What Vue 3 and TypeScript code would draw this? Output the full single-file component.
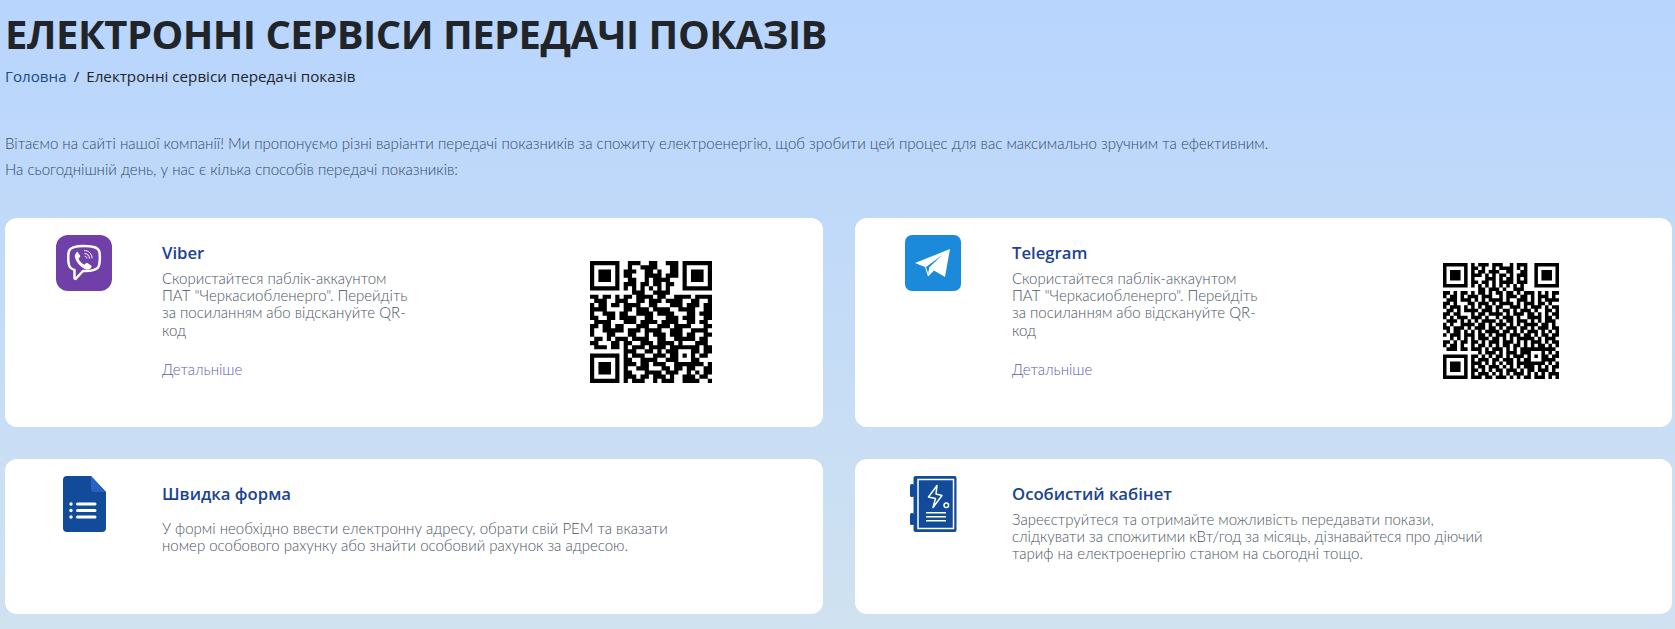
<script setup lang="ts">
const viberRows = [
  '.........###..##..###........',
  '.........#..####...##........',
  '........###..##.#..##........',
  '........##...####.###........',
  '.........##..#.####..........',
  '........###.##.##.##.........',
  '........#.#.#.#.#.#..........',
  '..........###..####..........',
  '##.##.#.##.####.##..####.####',
  '.###..###..##.###.####..##..#',
  '#.##.##.####..##...###.###.##',
  '####....##.###.####..####..##',
  '#..###.##..####.####...##.###',
  '##..##.####..##...###.###..##',
  '.####...###.####.####..##.##.',
  '##.##.##...###..###.####...##',
  '#..#####.###.####..###..####.',
  '#...##...##..#.###.###.##..##',
  '.##.#.###.####..##..#####.##.',
  '##...##.##..###.####.#...###.',
  '.###.##.#.###.####.#.#####.##',
  '........###..##.#.##.#...#.##',
  '........#.###..###.####.#.##.',
  '........##..####..###....#...',
  '........###.##.###..#######.#',
  '........#..###...##.##.##..##',
  '........##...####.###..#.#.##',
  '........###.##.###.#..###.##.',
  '........#.###..#.###..####..#'
]

const telegramRows = [
  '........#.###.###..#.###.........',
  '........##.#..#.####.#.#.........',
  '........#.##.###..##..##.........',
  '........###.#.#.##.#.###.........',
  '........#...###.#.##.#.#.........',
  '........##.##.#.####.###.........',
  '........#.#.#.#.#.#.#.#..........',
  '..........##.###.#..###..........',
  '##.#.##.#.##.#.##.##.#.###.#.#.##',
  '#.##.#.###.###..#.###.##.#.###.#.',
  '.###.###.#.#.####.#..###.#.#.####',
  '##.#...##.###.#.####.#.###.##.#..',
  '#.###.#.#.#.##.##..###.#.###.#.##',
  '.##.#.####.###.#.##.#.###.#..##.#',
  '##.##...#.##.####.#.###.##.#.#.##',
  '#.#.###.###.#..#.###.#..####.##.#',
  '.###.#.#.#.####.#.##.###.#.#.###.',
  '#.#..####.##.#.###.#.#.####.##.#.',
  '##.###.#.###.##.#.###.##.#.###.##',
  '.#.##.#.#.#.####.##.#.#.###.#.#.#',
  '#.###.###.##.#.###.###.##.#.##.##',
  '..#.#.#.#.###.##.#.#.#####.#.###.',
  '##.#.##.##.#.###.###.#.#.###.#.##',
  '#.##.#..#.##.#.#.##.##.#.#.##.#.#',
  '.###.##.###.#.###.#.#.##.#.#.###.',
  '..........#.###.#.###.##.#.##.#.#',
  '........##.#.#.##.#.###.####.#.##',
  '........#.###.##.###.#.#.#.#.###.',
  '........###.#.#.#.##.###.##.#.#.#',
  '........#.##.###.#.#.#.###.#.#.##',
  '........##.#.#.##.###.#.##.###.#.',
  '........#.###.#.#.#.###.#.#.#.###',
  '........###.##.###.#.#.##.###.#.#'
]

// paints the finder and alignment squares over the scanned data rows
function qrPath(rows: string[]): string {
  const n = rows.length
  const grid = rows.map((row) => row.split('').map((c) => c === '#'))
  const stamp = (x0: number, y0: number, size: number) => {
    for (let y = 0; y < size; y++) {
      for (let x = 0; x < size; x++) {
        const d = Math.min(x, y, size - 1 - x, size - 1 - y)
        grid[y0 + y][x0 + x] = d !== 1
      }
    }
  }
  stamp(0, 0, 7)
  stamp(n - 7, 0, 7)
  stamp(0, n - 7, 7)
  stamp(n - 9, n - 9, 5)
  let d = ''
  grid.forEach((row, y) => {
    row.forEach((on, x) => {
      if (on) d += `M${x} ${y}h1v1h-1z`
    })
  })
  return d
}

const viberQr = qrPath(viberRows)
const telegramQr = qrPath(telegramRows)
</script>

<template>
  <div class="page">
    <h1 class="title">ЕЛЕКТРОННІ СЕРВІСИ ПЕРЕДАЧІ ПОКАЗІВ</h1>
    <nav class="crumbs">
      <a class="crumb-link">Головна</a>
      <span class="crumb-sep">/</span>
      <span>Електронні сервіси передачі показів</span>
    </nav>
    <div class="intro">
      <p>Вітаємо на сайті нашої компанії! Ми пропонуємо різні варіанти передачі показників за спожиту електроенергію, щоб зробити цей процес для вас максимально зручним та ефективним.</p>
      <p>На сьогоднішній день, у нас є кілька способів передачі показників:</p>
    </div>

    <div class="cards">
      <section class="card">
        <div class="icon">
          <svg width="56" height="56" viewBox="0 0 56 56">
            <rect width="56" height="56" rx="12" fill="#7040a8" />
            <path d="M28 11c-8 0-13.500 1-15 5-1 3-1 10 0 14 .8 2.800 3 4.200 5.500 5v8c0 1 .8 1.200 1.500.5l7-7.500c8 .3 12.500-.5 15-3.500 2-2.500 2.300-11 1.300-16-1-4-5-5.500-14.800-5.500z" fill="none" stroke="#fff" stroke-width="2.500" stroke-linejoin="round" />
            <path d="M21 17.500c-1.800 1-2.600 2.800-2 5 1.600 5.500 6.500 10.500 11.500 12 2.200.6 3.800-.5 4.900-2.200.5-1 0-1.600-1-2.300l-2.700-1.700c-.9-.5-1.600-.3-2.200.3l-.9 1.100c-2.700-1.100-5-3.600-6.100-6.300l1.100-1c.6-.5.8-1.300.3-2.200l-1.700-2.500c-.7-1-1.500-1.200-2.200-.2z" fill="#fff" />
            <path d="M28.500 15.500c4.200 0 7.500 3.300 7.500 7.500M28.800 18.600c2.700 0 4.600 1.900 4.600 4.600M29.200 21.400c1.100 0 1.700.7 1.700 1.700" fill="none" stroke="#fff" stroke-width="1" stroke-linecap="round" />
          </svg>
        </div>
        <div class="body">
          <h2 class="card-title">Viber</h2>
          <p class="desc narrow">Скористайтеся паблік-аккаунтом ПАТ "Черкасиобленерго". Перейдіть за посиланням або відскануйте QR-код</p>
          <a class="more">Детальніше</a>
        </div>
        <svg class="qr qr-viber" viewBox="0 0 29 29">
          <path :d="viberQr" fill="#000" />
        </svg>
      </section>

      <section class="card card-shift">
        <div class="icon">
          <svg width="56" height="56" viewBox="0 0 56 56">
            <rect width="56" height="56" rx="7" fill="#1c8adb" />
            <path d="M45 14 10 28l10 4 3 9.500 6-6 11 6.500z" fill="#fff" />
            <path d="M38 19.500 21 32l2.300 7 1-6.500z" fill="#1c8adb" />
            <path d="M38 19.500 24.300 32.500l-1 6.500 1.800-5.500z" fill="#fff" />
          </svg>
        </div>
        <div class="body">
          <h2 class="card-title">Telegram</h2>
          <p class="desc narrow">Скористайтеся паблік-аккаунтом ПАТ "Черкасиобленерго". Перейдіть за посиланням або відскануйте QR-код</p>
          <a class="more">Детальніше</a>
        </div>
        <svg class="qr qr-telegram" viewBox="0 0 33 33">
          <path :d="telegramQr" fill="#000" />
        </svg>
      </section>

      <section class="card">
        <div class="icon">
          <svg width="43" height="56" viewBox="0 0 43 56">
            <path d="M4 0h24l15 16v36a4 4 0 0 1-4 4H4a4 4 0 0 1-4-4V4a4 4 0 0 1 4-4z" fill="#134b9b" />
            <path d="M28 0l15 16H31a3 3 0 0 1-3-3z" fill="#2a62c0" />
            <circle cx="8" cy="28" r="1.700" fill="#fff" />
            <circle cx="8" cy="34.500" r="1.700" fill="#fff" />
            <circle cx="8" cy="41" r="1.700" fill="#fff" />
            <path d="M14.500 28H32M14.500 34.500H32M14.500 41H32" stroke="#fff" stroke-width="3" stroke-linecap="round" />
          </svg>
        </div>
        <div class="body">
          <h2 class="card-title">Швидка форма</h2>
          <p class="desc form-text">У формі необхідно ввести електронну адресу, обрати свій РЕМ та вказати номер особового рахунку або знайти особовий рахунок за адресою.</p>
        </div>
      </section>

      <section class="card card-shift">
        <div class="icon">
          <svg width="47" height="56" viewBox="0 0 47 56">
            <rect x="3.500" width="43" height="56" rx="2" fill="#134b9b" />
            <rect x="0" y="8" width="4" height="13" rx="1.500" fill="#134b9b" />
            <rect x="0" y="37" width="4" height="12" rx="1.500" fill="#134b9b" />
            <rect x="8" y="3.500" width="35.500" height="49" fill="none" stroke="#fff" stroke-width="1.500" />
            <path d="M27 9.500 18.500 21l7 1.500-2.500 9 9-12-6-1.500z" fill="none" stroke="#fff" stroke-width="1.500" stroke-linejoin="round" />
            <circle cx="36.300" cy="29.300" r="2.300" fill="none" stroke="#fff" stroke-width="1.500" />
            <path d="M16 36.700h20M16 40.700h20M16 44.700h20" stroke="#fff" stroke-width="1.500" />
          </svg>
        </div>
        <div class="body">
          <h2 class="card-title">Особистий кабінет</h2>
          <p class="desc cabinet-text">Зареєструйтеся та отримайте можливість передавати покази, слідкувати за спожитими кВт/год за місяць, дізнавайтеся про діючий тариф на електроенергію станом на сьогодні тощо.</p>
        </div>
      </section>
    </div>
  </div>
</template>

<style scoped>
/** layout */
.page {
  box-sizing: border-box;
  min-height: 100vh;
  padding: 8px 3px 0 5px;
}
.cards {
  display: grid;
  grid-template-columns: 818px 817px;
  grid-template-rows: 209px 155px;
  column-gap: 32px;
  row-gap: 32px;
  margin-top: 36px;
}
.card {
  display: flex;
  align-items: flex-start;
  padding: 17px 0 0 51px;
}
.card-shift {
  padding-left: 50px;
}
.icon {
  display: flex;
  justify-content: center;
  flex: 0 0 56px;
}
.body {
  margin-left: 50px;
  padding-top: 6px;
}
.card-shift .body {
  margin-left: 51px;
}

/** other style */
.page {
  background: linear-gradient(180deg, #b8d5fe 0%, #d0e2f0 100%);
  font-family: 'Open Sans', sans-serif;
}
.title {
  margin: 0;
  font-size: 40px;
  line-height: 52px;
  font-weight: 700;
  letter-spacing: -0.55px;
  color: #212529;
}
.crumbs {
  margin-top: 5px;
  font-size: 15.2px;
  line-height: 22px;
  color: #212529;
}
.crumb-link {
  color: #1b4a80;
}
.crumb-sep {
  margin: 0 7px;
}
.intro {
  margin-top: 43px;
  font-family: 'Lato', sans-serif;
  font-weight: 300;
  font-size: 15.05px;
  line-height: 26px;
  color: #2f4a68;
}
.intro p {
  margin: 0;
}
.card {
  background: #fff;
  border-radius: 12px;
}
.card-title {
  margin: 0;
  font-size: 16.7px;
  line-height: 24px;
  font-weight: 600;
  color: #1b4390;
}
.desc {
  margin: 5px 0 0;
  font-family: 'Lato', sans-serif;
  font-weight: 300;
  font-size: 15px;
  line-height: 17.2px;
  color: #4a5562;
}
.narrow {
  width: 250px;
}
.form-text {
  width: 510px;
  margin-top: 14px;
}
.cabinet-text {
  width: 490px;
  margin-top: 5px;
}
.more {
  display: block;
  margin-top: 21px;
  font-family: 'Lato', sans-serif;
  font-weight: 300;
  font-size: 15px;
  line-height: 18px;
  color: #5b5fa6;
}
.qr {
  display: block;
}
.qr-viber {
  width: 122px;
  height: 122px;
  margin: 26px 0 0 178px;
}
.qr-telegram {
  width: 116px;
  height: 116px;
  margin: 28px 0 0 181px;
}
</style>

<style>
body {
  margin: 0;
}
</style>
